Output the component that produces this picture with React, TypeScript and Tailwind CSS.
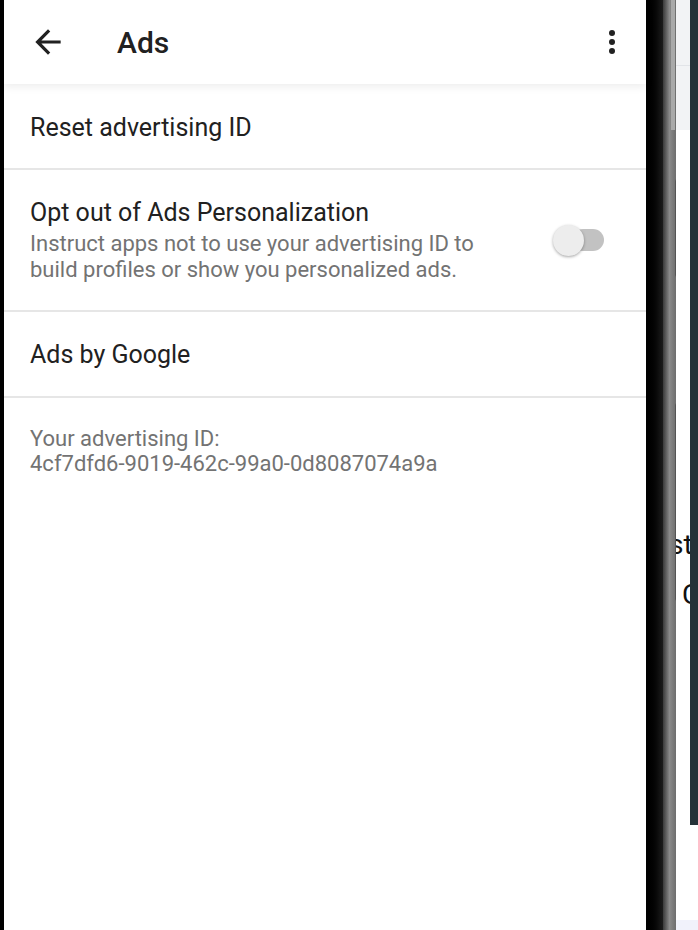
import React from 'react';

const font = { fontFamily: 'Roboto, "Noto Sans", sans-serif' };

function BackArrow() {
  return (
    <svg width="38" height="38" viewBox="0 0 24 24" fill="#212121">
      <path d="M20 11H7.83l5.59-5.59L12 4l-8 8 8 8 1.41-1.41L7.83 13H20v-2z" />
    </svg>
  );
}

function MoreVert() {
  return (
    <svg width="36" height="36" viewBox="0 0 24 24" fill="#212121">
      <circle cx="12" cy="6" r="2" />
      <circle cx="12" cy="12" r="2" />
      <circle cx="12" cy="18" r="2" />
    </svg>
  );
}

// Switch in off position
function Toggle() {
  return (
    <div className="relative h-[31px] w-[51px]">
      <div className="absolute right-0 top-[4px] h-[22px] w-[32px] rounded-full bg-[#c2c2c2]" />
      <div className="absolute left-0 top-0 h-[31px] w-[31px] rounded-full bg-[#ededed] shadow-[0_1px_3px_rgba(0,0,0,0.35)]" />
    </div>
  );
}

function Divider() {
  return <div className="h-[2px] bg-[#e6e6e6]" />;
}

export default function App() {
  return (
    <div className="flex h-[930px] w-[698px] overflow-hidden bg-white" style={font}>
      <div className="w-[4px] shrink-0 bg-black" />

      {/* phone screen */}
      <div className="flex w-[642px] shrink-0 flex-col bg-white">
        <header className="relative z-10 flex h-[84px] items-center bg-white shadow-[0_3px_8px_rgba(0,0,0,0.07)]">
          <div className="ml-[25px] flex items-center">
            <BackArrow />
          </div>
          <h1 className="ml-[50px] text-[30px] font-medium text-[#212121]">Ads</h1>
          <div className="ml-auto mr-[16px] flex items-center">
            <MoreVert />
          </div>
        </header>

        <div className="flex h-[84px] items-center pl-[26px] pt-[3px] text-[25px] text-[#212121]">
          Reset advertising ID
        </div>
        <Divider />

        <div className="flex h-[140px] items-center justify-between pl-[26px] pr-[42px]">
          <div className="pt-[1px]">
            <div className="text-[25px] leading-[30px] text-[#212121]">Opt out of Ads Personalization</div>
            <div className="mt-[3px] text-[22px] leading-[26px] text-[#737373]">
              Instruct apps not to use your advertising ID to
              <br />
              build profiles or show you personalized ads.
            </div>
          </div>
          <Toggle />
        </div>
        <Divider />

        <div className="flex h-[84px] items-center pl-[26px] pt-[2px] text-[25px] text-[#212121]">Ads by Google</div>
        <Divider />

        <div className="pl-[26px] pt-[28px] text-[22px] leading-[25px] text-[#737373]">
          <div>Your advertising ID:</div>
          <div>4cf7dfd6-9019-462c-99a0-0d8087074a9a</div>
        </div>
      </div>

      {/* device bezel */}
      <div className="w-[17px] shrink-0 bg-gradient-to-r from-black via-[#050505] to-[#1c1c1c]" />
      <div className="relative w-[13px] shrink-0 bg-gradient-to-r from-[#3a3a3a] via-[#8a8a8a] to-[#6e6e6e]">
        <div className="absolute right-[1px] top-[0px] h-[130px] w-[4px] bg-[#a9a9a9]" />
        <div className="absolute right-[-6px] top-[178px] h-[100px] w-[7px] rounded-sm bg-[#8c8c8c] shadow-[inset_0_0_0_1px_#555]" />
        <div className="absolute right-[-6px] top-[402px] h-[200px] w-[7px] rounded-sm bg-[#8c8c8c] shadow-[inset_0_0_0_1px_#555]" />
      </div>

      {/* page behind */}
      <div className="relative flex w-[14px] shrink-0 flex-col overflow-hidden bg-white">
        <div className="h-[130px] bg-[#f2f3f5]">
          <div className="mt-[65px] h-[1px] bg-[#e2e4e8]" />
        </div>
        <div className="absolute left-[-7px] top-[528px] text-[28px] leading-[34px] text-[#111]">st</div>
        <div className="absolute left-[6px] top-[578px] text-[28px] leading-[34px] text-[#111]">C</div>
        <div className="mt-auto h-[10px] bg-[#f1f2fb]" />
      </div>
      <div className="flex w-[8px] shrink-0 flex-col">
        <div className="h-[825px] bg-[#263238]" />
        <div className="flex-1 bg-white" />
        <div className="h-[10px] bg-[#f1f2fb]" />
      </div>
    </div>
  );
}
